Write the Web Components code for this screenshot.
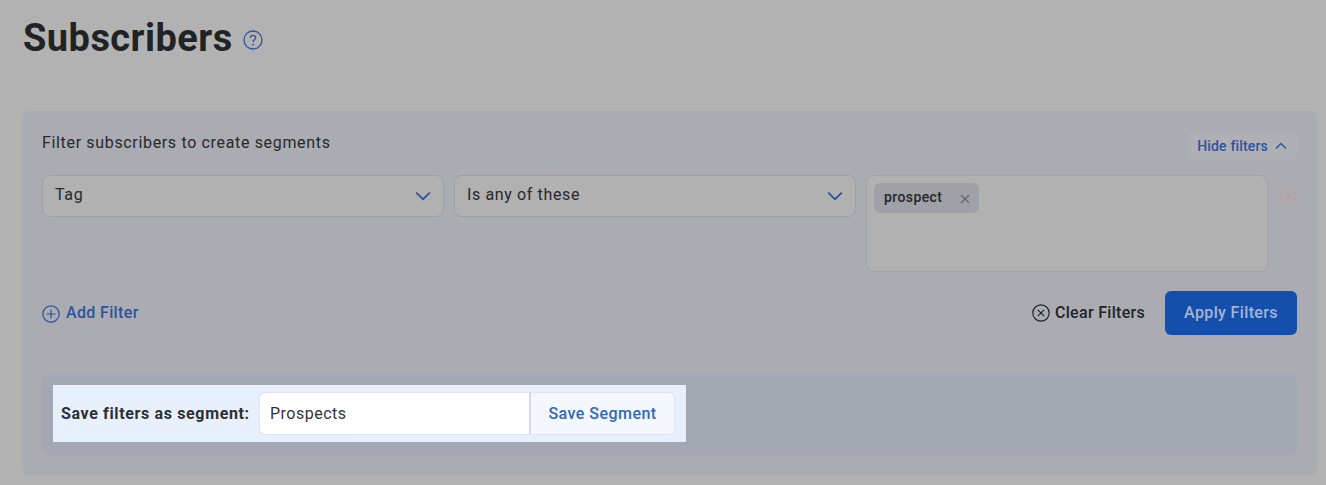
<!DOCTYPE html>
<html>
<head>
<meta charset="utf-8">
<style>
  html, body { margin: 0; padding: 0; height: 485px; overflow: hidden; background: #b2b2b2; }
  body { font-family: Roboto, sans-serif; color: #222326; }
</style>
</head>
<body>
<subscribers-page></subscribers-page>
<script>
  const chevronDown = `<svg width="16" height="10" viewBox="0 0 16 10" fill="none"><path d="M1.2 1.6 8 8.2l6.8-6.6" stroke="#2b539f" stroke-width="1.7"/></svg>`;

  class PageTitle extends HTMLElement {
    constructor() {
      super();
      this.attachShadow({ mode: "open" }).innerHTML = `
        <style>
          :host { display: flex; align-items: center; gap: 10px; height: 40px; }
          h1 { margin: 0; font: 700 38px/40px Roboto, sans-serif; letter-spacing: .45px; color: #212224; }
          svg { display: block; margin-top: 3px; }
        </style>
        <h1><slot></slot></h1>
        <svg width="20" height="20" viewBox="0 0 20 20" fill="none">
          <circle cx="10" cy="10" r="9" stroke="#2b539f" stroke-width="1.3"/>
          <path d="M7.4 7.9c0-1.5 1.1-2.5 2.6-2.5s2.6 1 2.6 2.3c0 2.2-2.6 2.1-2.6 4.4" stroke="#2b539f" stroke-width="1.3"/>
          <circle cx="10" cy="14.6" r=".9" fill="#2b539f"/>
        </svg>`;
    }
  }

  class FilterSelect extends HTMLElement {
    constructor() {
      super();
      this.attachShadow({ mode: "open" }).innerHTML = `
        <style>
          :host { display: flex; align-items: center; justify-content: space-between; box-sizing: border-box;
            height: 42px; padding: 0 12px; background: #b1b1b1; border: 1px solid #9ea0a8; border-radius: 8px;
            font: 400 16px Roboto, sans-serif; letter-spacing: .63px; color: #27282b; }
          span { margin-top: -3px; }
        </style>
        <span><slot></slot></span>${chevronDown}`;
    }
  }

  class TagBox extends HTMLElement {
    constructor() {
      super();
      this.attachShadow({ mode: "open" }).innerHTML = `
        <style>
          :host { display: block; box-sizing: border-box; height: 97px; padding: 7px 7px;
            background: #b1b1b1; border: 1px solid #a2a3aa; border-radius: 8px; }
          .chip { display: inline-flex; align-items: center; height: 30px; box-sizing: border-box; padding: 0 9px 0 10px;
            background: #a0a1a8; border-radius: 6px; font: 500 14px Roboto, sans-serif; letter-spacing: .4px; color: #25262a; }
          .chip span { margin-top: -2px; }
          svg { margin-left: 18px; margin-top: 2px; }
        </style>
        <div class="chip"><span><slot></slot></span>
          <svg width="10" height="10" viewBox="0 0 10 10"><path d="M1 1l8 8M9 1 1 9" stroke="#62646f" stroke-width="1.3"/></svg>
        </div>`;
    }
  }

  class HideFilters extends HTMLElement {
    constructor() {
      super();
      this.attachShadow({ mode: "open" }).innerHTML = `
        <style>
          :host { display: flex; align-items: center; gap: 7px; height: 28px; padding: 0 10px 0 9px;
            background: #afb0b5; border-radius: 6px; font: 500 14px Roboto, sans-serif; letter-spacing: .17px; color: #2b539f; }
        </style>
        <slot></slot>
        <svg width="12" height="8" viewBox="0 0 12 8" fill="none"><path d="M1 6.6 6 1.4l5 5.2" stroke="#2b539f" stroke-width="1.4"/></svg>`;
    }
  }

  class SaveSegment extends HTMLElement {
    constructor() {
      super();
      this.attachShadow({ mode: "open" }).innerHTML = `
        <style>
          :host { display: flex; align-items: center; box-sizing: border-box; width: 633px; height: 57px;
            padding: 0 11px 0 8px; background: #e8f0fd; font-family: Roboto, sans-serif; }
          label { font: 700 16px Roboto, sans-serif; letter-spacing: .64px; color: #2c2f36; width: 198px; white-space: nowrap; }
          .input { box-sizing: border-box; width: 270px; height: 43px; padding: 0 10px; display: flex; align-items: center;
            background: #fff; border: 1px solid #dfe4ee; border-right: 0; border-radius: 6px 0 0 6px;
            font-size: 16px; letter-spacing: .5px; color: #33353a; }
          button { box-sizing: border-box; width: 146px; height: 43px; padding: 0; background: #f4f7fd;
            border: 1px solid #dfe4ee; border-left: 2px solid #d5dae5; border-radius: 0 6px 6px 0;
            font: 500 16px Roboto, sans-serif; letter-spacing: .46px; color: #2f69b8; }
        </style>
        <label>Save filters as segment:</label>
        <div class="input">Prospects</div>
        <button>Save Segment</button>`;
    }
  }

  class FilterPanel extends HTMLElement {
    constructor() {
      super();
      this.attachShadow({ mode: "open" }).innerHTML = `
        <style>
          :host { display: block; box-sizing: border-box; width: 1295px; height: 364px; padding: 20px 20px 0;
            background: #abacb2; border-radius: 6px; }
          .head { display: flex; justify-content: space-between; align-items: flex-start; height: 44px; }
          .head p { margin: 0; font: 400 16px/24px Roboto, sans-serif; letter-spacing: .66px; color: #27282b; }
          .head hide-filters { margin-top: 1px; }
          .row { display: grid; grid-template-columns: 402px 402px 402px 1fr; column-gap: 10px; align-items: start; }
          .remove { margin: 12px 0 0 1px; display: block; }
          .actions { display: flex; align-items: center; margin-top: 19px; height: 44px; }
          .add { display: flex; align-items: center; gap: 6px; padding-bottom: 2px; font: 500 16px Roboto, sans-serif; letter-spacing: .35px; color: #2b539f; }
          .add svg { margin-top: 3px; }
          .clear { margin-left: auto; display: flex; align-items: center; gap: 5px; padding-bottom: 1px; font: 500 16px Roboto, sans-serif; letter-spacing: .3px; color: #232427; }
          .apply { margin-left: 20px; width: 132px; height: 44px; padding: 0 0 2px; background: #144fae; border: 0; border-radius: 6px;
            font: 500 16px Roboto, sans-serif; letter-spacing: .36px; color: #a7b4cf; }
          .bar { margin-top: 39px; height: 81px; padding: 11px; box-sizing: border-box; background: #a3a8b3; border-radius: 6px; }
        </style>
        <div class="head">
          <p>Filter subscribers to create segments</p>
          <hide-filters>Hide filters</hide-filters>
        </div>
        <div class="row">
          <filter-select>Tag</filter-select>
          <filter-select>Is any of these</filter-select>
          <tag-box>prospect</tag-box>
          <svg class="remove" width="18" height="18" viewBox="0 0 18 18" fill="none">
            <circle cx="9" cy="9" r="8" stroke="#c39aa3" stroke-width="1.2"/>
            <path d="M5.8 5.8l6.4 6.4M12.2 5.8l-6.4 6.4" stroke="#c39aa3" stroke-width="1.2"/>
          </svg>
        </div>
        <div class="actions">
          <div class="add">
            <svg width="18" height="18" viewBox="0 0 18 18" fill="none">
              <circle cx="9" cy="9" r="8.2" stroke="#2b539f" stroke-width="1.2"/>
              <path d="M9 4.5v9M4.5 9h9" stroke="#2b539f" stroke-width="1.2"/>
            </svg>
            Add Filter
          </div>
          <div class="clear">
            <svg width="18" height="18" viewBox="0 0 18 18" fill="none">
              <circle cx="9" cy="9" r="8.2" stroke="#232427" stroke-width="1.2"/>
              <path d="M5.8 5.8l6.4 6.4M12.2 5.8l-6.4 6.4" stroke="#232427" stroke-width="1.2"/>
            </svg>
            Clear Filters
          </div>
          <button class="apply">Apply Filters</button>
        </div>
        <div class="bar"><save-segment></save-segment></div>`;
    }
  }

  class SubscribersPage extends HTMLElement {
    constructor() {
      super();
      this.attachShadow({ mode: "open" }).innerHTML = `
        <style>
          :host { display: block; padding: 18px 0 0 22px; }
          page-title { margin-left: 1px; margin-bottom: 53px; }
        </style>
        <page-title>Subscribers</page-title>
        <filter-panel></filter-panel>`;
    }
  }

  customElements.define("page-title", PageTitle);
  customElements.define("filter-select", FilterSelect);
  customElements.define("tag-box", TagBox);
  customElements.define("hide-filters", HideFilters);
  customElements.define("save-segment", SaveSegment);
  customElements.define("filter-panel", FilterPanel);
  customElements.define("subscribers-page", SubscribersPage);
</script>
</body>
</html>
